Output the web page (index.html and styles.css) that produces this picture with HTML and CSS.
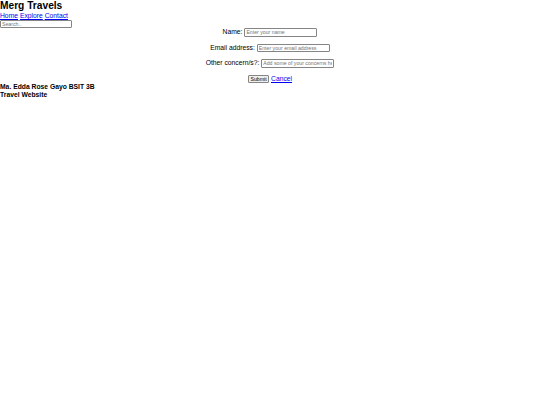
FILE: index.html
```html
<!DOCTYPE html>
<html lang="en">
<head>
    <meta charset="UTF-8">
    <meta name="viewport" content="width=device-width, initial-scale=1.0">
    <title>Merg Travels</title>
    <link rel="stylesheet" href="styles.css">
</head>
<body>
    <header>
        <h2 class="logo">Merg Travels</h2>
        <nav>
            <a href="#">Home</a>
            <a href="#">Explore</a>
            <a href="#">Contact</a>
        </nav>
        <input type="text" class="search" placeholder="Search..">
    </header>

    <!-- Formulario de contacto -->
    <form class="contact">
        <div class="row">
            <label for="name">Name:</label>
            <input type="text" id="name" placeholder="Enter your name">
        </div>
        <div class="row">
            <label for="email">Email address:</label>
            <input type="email" id="email" placeholder="Enter your email address">
        </div>
        <div class="row">
            <label for="concern">Other concern/s?:</label>
            <input type="text" id="concern" placeholder="Add some of your concerns here">
        </div>
        <div class="row">
            <button type="submit">Submit</button>
            <a href="#">Cancel</a>
        </div>
    </form>

    <footer>
        <div>Ma. Edda Rose Gayo BSIT 3B</div>
        <div>Travel Website</div>
    </footer>
</body>
</html>
```

FILE: styles.css
```css
body {
    margin: 0;
    font-family: "Liberation Sans", Arial, sans-serif;
    font-size: 6.75px;
    color: #000;
    background: #fff;
}

.logo {
    margin: 0;
    font-size: 10.2px;
    line-height: 12px;
    font-weight: bold;
}

a {
    color: #0000ee;
}

input {
    box-sizing: border-box;
    width: 73px;
    height: 8.5px;
    padding: 0 1px;
    margin: 0;
    font-family: "Liberation Sans", Arial, sans-serif;
    font-size: 5.2px;
    border: 1px solid #858585;
    border-radius: 1px;
    vertical-align: middle;
}

input::placeholder {
    color: #757575;
}

.search {
    display: block;
    width: 72px;
    margin-top: 0.5px;
}

.contact {
    display: flex;
    flex-direction: column;
    align-items: center;
    gap: 7px;
    margin: 0;
}

.row {
    line-height: 8.5px;
}

button {
    font-family: "Liberation Sans", Arial, sans-serif;
    font-size: 5.2px;
    height: 8px;
    padding: 0 1.5px;
    margin: 0;
    border: 1px solid #858585;
    border-radius: 1px;
    background: #efefef;
    vertical-align: middle;
}

footer {
    font-weight: bold;
    line-height: 7.7px;
}
```
